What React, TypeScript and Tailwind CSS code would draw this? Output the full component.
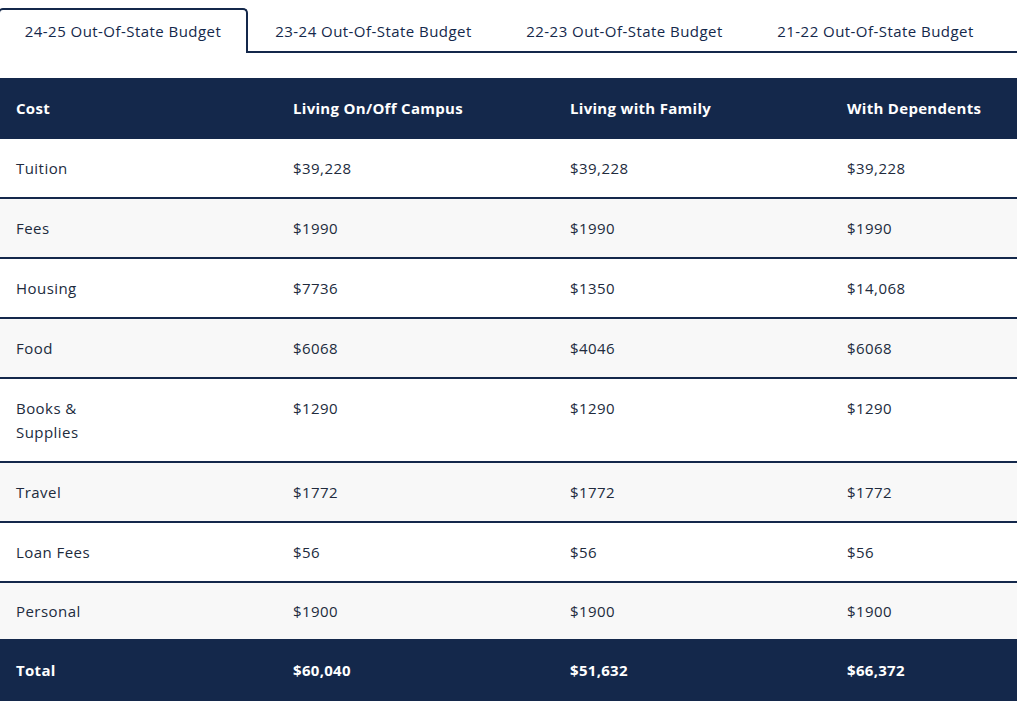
const tabs = [
  "24-25 Out-Of-State Budget",
  "23-24 Out-Of-State Budget",
  "22-23 Out-Of-State Budget",
  "21-22 Out-Of-State Budget",
];

const headers = ["Cost", "Living On/Off Campus", "Living with Family", "With Dependents"];

const rows: [string, string, string, string][] = [
  ["Tuition", "$39,228", "$39,228", "$39,228"],
  ["Fees", "$1990", "$1990", "$1990"],
  ["Housing", "$7736", "$1350", "$14,068"],
  ["Food", "$6068", "$4046", "$6068"],
  ["Books & Supplies", "$1290", "$1290", "$1290"],
  ["Travel", "$1772", "$1772", "$1772"],
  ["Loan Fees", "$56", "$56", "$56"],
  ["Personal", "$1900", "$1900", "$1900"],
];

const totals = ["Total", "$60,040", "$51,632", "$66,372"];

const grid = "grid grid-cols-[277px_277px_277px_1fr]";

export default function App() {
  return (
    <div className="w-[1017px] h-[703px] overflow-hidden bg-white font-['Open_Sans',sans-serif] text-[15px] tracking-[0.45px] text-[#212b3d]">
      {/* tabs */}
      <div className="flex pt-2">
        {tabs.map((t, i) =>
          i === 0 ? (
            <div
              key={t}
              className="-ml-[2px] flex h-[45px] w-[250px] shrink-0 items-center justify-center rounded-t-[5px] border-2 border-b-0 border-[#14284b] text-[#14284b]"
            >
              {t}
            </div>
          ) : (
            <div
              key={t}
              className="flex h-[45px] w-[251px] shrink-0 items-center justify-center border-b-2 border-[#14284b] pt-[3px] text-[#14284b]"
            >
              {t}
            </div>
          )
        )}
        <div className="flex-1 border-b-2 border-[#14284b]" />
      </div>

      {/* table */}
      <div className="mt-[25px]">
        <div className={`${grid} h-[61px] items-center bg-[#14284b] font-bold tracking-[0.3px] text-white`}>
          {headers.map((h) => (
            <div key={h} className="px-4">
              {h}
            </div>
          ))}
        </div>

        {rows.map((r, i) => {
          const last = i === rows.length - 1;
          return (
            <div
              key={r[0]}
              className={`${grid} ${last ? "" : "border-b-2 border-[#14284b]"} ${i % 2 === 1 ? "bg-[#f8f8f8]" : "bg-white"}`}
            >
              {r.map((c, j) => (
                <div
                  key={j}
                  className={`px-4 leading-6 ${last ? "py-[16px]" : "py-[17px]"} ${j === 0 ? "max-w-[110px]" : ""}`}
                >
                  {c}
                </div>
              ))}
            </div>
          );
        })}

        <div className={`${grid} h-[62px] items-center bg-[#14284b] font-bold tracking-[0.3px] text-white`}>
          {totals.map((t) => (
            <div key={t} className="px-4">
              {t}
            </div>
          ))}
        </div>
      </div>
    </div>
  );
}
